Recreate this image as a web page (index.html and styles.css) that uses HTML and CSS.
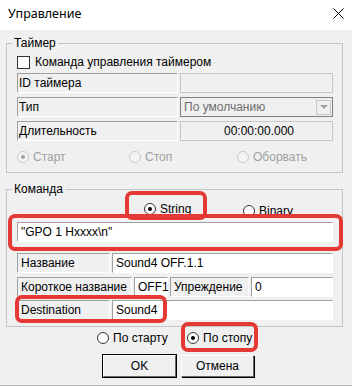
FILE: index.html
```html
<!DOCTYPE html>
<html lang="ru">
<head>
    <meta charset="UTF-8">
    <title>Управление</title>
    <link rel="stylesheet" href="styles.css">
</head>
<body>

<div class="window">
    <div class="titlebar">
        <span class="title">Управление</span>
        <svg class="close" width="11" height="11" viewBox="0 0 11 11">
            <path d="M0.5 0.5 L10.5 10.5 M10.5 0.5 L0.5 10.5" stroke="#000" stroke-width="1" fill="none"/>
        </svg>
    </div>

    <div class="dialog">
        <fieldset class="group group-timer">
            <legend>Таймер</legend>
            <div class="check-row">
                <span class="checkbox"></span>
                <span>Команда управления таймером</span>
            </div>
            <div class="row">
                <div class="cell label timer-label">ID таймера</div>
                <div class="cell value disabled"></div>
            </div>
            <div class="row">
                <div class="cell label timer-label">Тип</div>
                <div class="cell combo">
                    <span class="combo-text">По умолчанию</span>
                    <span class="combo-btn"><span class="arrow"></span></span>
                </div>
            </div>
            <div class="row">
                <div class="cell label timer-label">Длительность</div>
                <div class="cell value disabled centered">00:00:00.000</div>
            </div>
            <div class="radio-row timer-radios">
                <label class="radio off r-start"><span class="dot checked"></span>Старт</label>
                <label class="radio off r-stop"><span class="dot"></span>Стоп</label>
                <label class="radio off r-abort"><span class="dot"></span>Оборвать</label>
            </div>
        </fieldset>

        <fieldset class="group group-cmd">
            <legend>Команда</legend>
            <div class="radio-row type-radios">
                <label class="radio r-string"><span class="dot checked"></span>String</label>
                <label class="radio r-binary"><span class="dot"></span>Binary</label>
            </div>
            <div class="cell value cmd-input">"GPO 1 Hxxxx\n"</div>
            <div class="row row-name">
                <div class="cell label name-label">Название</div>
                <div class="cell value">Sound4 OFF.1.1</div>
            </div>
            <div class="row row-short">
                <div class="cell label short-label">Короткое название</div>
                <div class="cell value short-value">OFF1</div>
                <div class="cell label lead-label">Упреждение</div>
                <div class="cell value">0</div>
            </div>
            <div class="row row-dest">
                <div class="cell label name-label">Destination</div>
                <div class="cell value">Sound4</div>
            </div>
        </fieldset>

        <div class="radio-row end-radios">
            <label class="radio r-bystart"><span class="dot"></span>По старту</label>
            <label class="radio r-bystop"><span class="dot checked"></span>По стопу</label>
        </div>

        <div class="buttons">
            <button class="btn default">OK</button>
            <button class="btn">Отмена</button>
        </div>
    </div>

    <!-- red annotation frames -->
    <div class="mark mark-string"></div>
    <div class="mark mark-input"></div>
    <div class="mark mark-dest"></div>
    <div class="mark mark-stop"></div>
</div>

</body>
</html>
```

FILE: styles.css
```css
body {
    margin: 0;
    background: #f0f0f0;
    font-family: "Liberation Sans", Arial, sans-serif;
    font-size: 12px;
    color: #000;
}
.window {
    position: relative;
    width: 352px;
    height: 386px;
    background: #f0f0f0;
    overflow: hidden;
}
.titlebar {
    height: 30px;
    background: #fff;
    display: flex;
    align-items: center;
    justify-content: space-between;
    padding: 0 8px 0 8px;
    box-sizing: border-box;
}
.title {
    font-family: "Noto Sans", sans-serif;
    font-size: 12.5px;
    margin-top: -3px;
}
.close {
    margin-top: -3px;
}
.dialog {
    padding-left: 6px;
    height: 356px;
    box-sizing: border-box;
    border-bottom: 1px solid #b8b8b8;
    display: flex;
    flex-direction: column;
}
.group {
    width: 337px;
    box-sizing: border-box;
    margin: 0;
    border: 1px solid #c4c4c4;
    padding: 5px 9px 8px 10px;
}
.group legend {
    margin-left: -5px;
    padding: 0 2px;
    line-height: 13px;
}
.group-timer {
    margin-top: 7px;
}
.group-cmd {
    margin-top: 10px;
    padding-bottom: 6px;
}
.check-row {
    display: flex;
    align-items: center;
    gap: 5px;
    height: 14px;
}
.checkbox {
    width: 11px;
    height: 11px;
    border: 1px solid #333;
    background: #fff;
}
.row {
    display: flex;
    height: 20px;
    margin-top: 4px;
    gap: 2px;
}
.cell {
    box-sizing: border-box;
    height: 20px;
    line-height: 18px;
    padding: 0 3px;
    border-top: 1px solid #a0a0a0;
    border-left: 1px solid #a0a0a0;
    border-right: 1px solid #fff;
    border-bottom: 1px solid #fff;
    white-space: nowrap;
}
.label {
    background: #f0f0f0;
}
.value {
    flex: 1;
    background: #fff;
}
.value.disabled {
    background: #f0f0f0;
    border-color: #c8c8c8;
}
.centered {
    text-align: center;
    padding-left: 8px;
}
.timer-label {
    width: 161px;
    padding-left: 1px;
}
.combo {
    flex: 1;
    display: flex;
    justify-content: space-between;
    align-items: center;
    background: #f0f0f0;
    border: 1px solid #808080;
    padding: 0 1px 0 3px;
    color: #6d6d6d;
}
.combo-btn {
    width: 15px;
    height: 15px;
    box-sizing: border-box;
    border: 1px solid #c8c8c8;
    display: flex;
    align-items: center;
    justify-content: center;
}
.arrow {
    width: 0;
    height: 0;
    border-left: 4px solid transparent;
    border-right: 4px solid transparent;
    border-top: 4px solid #a0a0a0;
}
.radio-row {
    display: flex;
    align-items: center;
    height: 14px;
    position: relative;
}
.radio {
    display: flex;
    align-items: center;
    gap: 4px;
    position: absolute;
}
.dot {
    width: 10px;
    height: 10px;
    border-radius: 50%;
    border: 1px solid #333;
    background: #fff;
    display: flex;
    align-items: center;
    justify-content: center;
}
.dot.checked::after {
    content: "";
    width: 4px;
    height: 4px;
    border-radius: 50%;
    background: #000;
}
.radio.off {
    color: #a0a0a0;
}
.radio.off .dot {
    border-color: #c8c8c8;
    background: #f4f4f4;
}
.radio.off .dot.checked::after {
    background: #a0a0a0;
}
.timer-radios {
    margin-top: 9px;
}
.r-start { left: 0; }
.r-stop { left: 112px; }
.r-abort { left: 220px; }

.type-radios {
    height: 15px;
}
.r-string { left: 127px; top: 1px; }
.r-binary { left: 226px; top: 3px; }

.cmd-input {
    margin-top: 6px;
    flex: none;
    width: 316px;
    padding-left: 3px;
}
.row-name {
    margin-top: 11px;
}
.row-dest {
    margin-top: 3px;
}
.name-label {
    width: 93px;
}
.short-label {
    width: 115px;
}
.short-value {
    flex: none;
    width: 34px;
}
.lead-label {
    width: 79px;
}

.end-radios {
    margin-top: 4px;
}
.r-bystart { left: 91px; }
.r-bystop { left: 181px; }

.buttons {
    display: flex;
    gap: 5px;
    margin-top: 10px;
    padding-left: 97px;
}
.btn {
    width: 73px;
    height: 22px;
    font-family: "Liberation Sans", Arial, sans-serif;
    font-size: 12px;
    background: #f0f0f0;
    border: 1px solid;
    border-color: #fff #696969 #696969 #fff;
    box-shadow: 1px 1px 0 #000;
    padding: 0;
}
.btn.default {
    outline: 1px solid #000;
}

.mark {
    position: absolute;
    box-sizing: border-box;
    border: 4px solid #e53935;
    border-radius: 7px;
}
.mark-string {
    left: 125px;
    top: 191px;
    width: 82px;
    height: 29px;
}
.mark-input {
    left: 8px;
    top: 214px;
    width: 335px;
    height: 37px;
}
.mark-dest {
    left: 15px;
    top: 295px;
    width: 152px;
    height: 28px;
}
.mark-stop {
    left: 181px;
    top: 322px;
    width: 77px;
    height: 30px;
}
```
